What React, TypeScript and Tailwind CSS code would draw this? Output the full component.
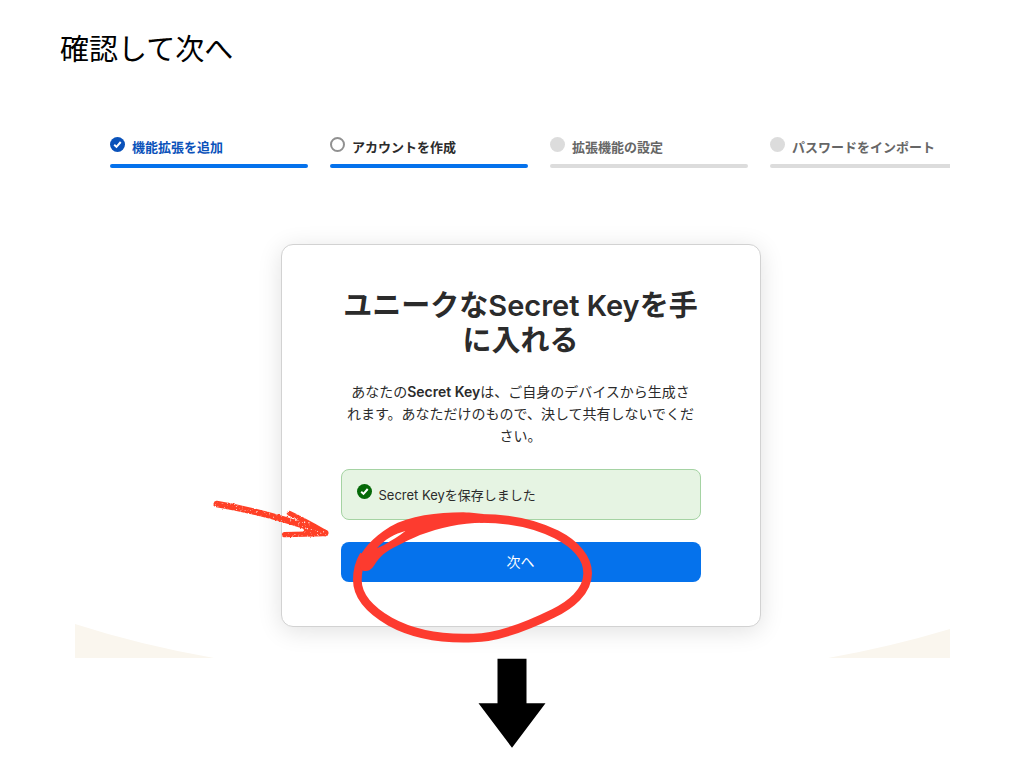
const steps = [
  { label: '機能拡張を追加', state: 'done' },
  { label: 'アカウントを作成', state: 'current' },
  { label: '拡張機能の設定', state: 'todo' },
  { label: 'パスワードをインポート', state: 'todo' },
];

const textColors: Record<string, string> = {
  done: 'text-[#0a52ba]',
  current: 'text-[#2b2b2b]',
  todo: 'text-[#666666]',
};

function CheckCircle({ className }: { className: string }) {
  return (
    <svg viewBox="0 0 15 15" className={`size-[15px] shrink-0 ${className}`} aria-hidden="true">
      <circle cx="7.5" cy="7.5" r="7.5" fill="currentColor" />
      <path d="M4.2 7.7l2.300 2.200 4.200-4.900" fill="none" stroke="#fff" strokeWidth="2" />
    </svg>
  );
}

function StepMarker({ state }: { state: string }) {
  if (state === 'done') return <CheckCircle className="text-[#0a52ba]" />;
  if (state === 'current') return <div className="size-[15px] shrink-0 rounded-full border-2 border-[#919191]" />;
  return <div className="size-[15px] shrink-0 rounded-full bg-[#dcdcdc]" />;
}

function HandDrawnCircle() {
  return (
    <svg viewBox="30 159 741 411" className="pointer-events-none absolute -top-[34px] left-[9px] h-[137px] w-[247px]" aria-hidden="true">
      <path
        d="M420 190C600 190 743 264 743 355C743 410 690 452 640 475C585 502 480 548 400 549C325 552 235 547 150 500C95 468 52 425 52 375C52 345 60 320 72 300"
        fill="none"
        stroke="#fd3b2f"
        strokeWidth="26"
      />
      {/* overlapping start and end of the stroke, with the thin opening between them */}
      <path
        d="M48 325C70 280 95 250 150 215C210 182 290 172 370 172C395 173 410 176 430 177V203C360 204 300 218 240 240C190 262 150 282 130 298C105 320 103 338 88 346C75 352 62 346 60 335ZM111 280L132 270C155 256 177 244 196 228C165 236 134 253 111 280Z"
        fill="#fd3b2f"
        fillRule="evenodd"
      />
    </svg>
  );
}

function CrayonArrow() {
  return (
    <svg viewBox="36 132 354 117" className="pointer-events-none absolute -top-[43px] -left-[129px] h-[39px] w-[118px]" aria-hidden="true">
      <filter id="crayon" x="-5%" y="-10%" width="110%" height="120%">
        <feTurbulence type="fractalNoise" baseFrequency="0.16" numOctaves="2" seed="4" result="noise" />
        <feDisplacementMap in="SourceGraphic" in2="noise" scale="7" xChannelSelector="R" yChannelSelector="G" result="rough" />
        <feColorMatrix in="noise" type="matrix" values="0 0 0 0 0  0 0 0 0 0  0 0 0 0 0  0 0 0 -4 3.500" result="grain" />
        <feComposite in="rough" in2="grain" operator="in" />
      </filter>
      <g fill="none" stroke="#ff4128" strokeLinecap="round" filter="url(#crayon)">
        <path d="M50 147C130 160 240 186 376 234" strokeWidth="19" />
        <path d="M268 175C300 190 330 206 376 232" strokeWidth="15" />
        <path d="M254 239L376 236" strokeWidth="16" />
        <path d="M315 216L374 234L320 234Z" strokeWidth="12" fill="#ff4128" />
      </g>
    </svg>
  );
}

export default function App() {
  return (
    <main className="flex min-h-screen flex-col bg-white font-['Inter','Noto_Sans_CJK_JP',sans-serif] text-[#2b2b2b]">
      <h1 className="px-[60px] pt-[30px] text-[29px] leading-10 text-black">確認して次へ</h1>

      <section className="relative mr-[74px] ml-[75px] mt-[66px] overflow-hidden pb-[31px]">
        <svg viewBox="0 0 139 34" className="absolute bottom-0 left-0 h-[34px] w-[139px]" aria-hidden="true">
          <path d="M0 0Q65 21 139 34H0Z" fill="#faf6ee" />
        </svg>
        <svg viewBox="0 0 122 29" className="absolute right-0 bottom-0 h-[29px] w-[122px]" aria-hidden="true">
          <path d="M122 0Q62 18 0 29H122Z" fill="#faf6ee" />
        </svg>

        <ol className="flex gap-[22px] pl-[35px]">
          {steps.map((step) => (
            <li key={step.label} className="w-[198px] shrink-0">
              <div className={`flex gap-[7px] pt-px text-[13px] leading-5 font-bold ${textColors[step.state]}`}>
                <StepMarker state={step.state} />
                <span>{step.label}</span>
              </div>
              <div className={`mt-[7px] h-1 rounded-full ${step.state === 'todo' ? 'bg-[#dcdcdc]' : 'bg-[#0572ec]'}`} />
            </li>
          ))}
        </ol>

        <div className="flex justify-center pt-[76px] pl-4">
          <div className="w-[480px] rounded-xl border border-[#d2d2d2] bg-white px-[59px] pt-[43px] pb-11 shadow-[0_4px_24px_rgba(0,0,0,0.12)]">
            <h2 className="text-center text-[29px] leading-[35px] font-semibold">ユニークなSecret Keyを手に入れる</h2>
            <p className="mt-[23px] px-1 text-center text-sm leading-[22px]">
              あなたの<strong className="font-semibold">Secret Key</strong>は、ご自身のデバイスから生成されます。あなただけのもので、決して共有しないでください。
            </p>
            <div role="status" className="mt-[22px] flex gap-[7px] rounded-lg border border-[#a5d3a3] bg-[#e6f4e3] px-[15px] pt-[14px] pb-[13px] text-[13px] leading-[22px]">
              <CheckCircle className="text-[#056908]" />
              <span>Secret Keyを保存しました</span>
            </div>
            <div className="relative mt-[22px]">
              <button type="button" className="block h-10 w-full rounded-lg bg-[#0572ec] pb-px text-sm text-white">次へ</button>
              <HandDrawnCircle />
              <CrayonArrow />
            </div>
          </div>
        </div>
      </section>

      <svg viewBox="0 0 68 90" className="mx-auto h-[90px] w-[68px]" aria-hidden="true">
        <path d="M19.500.7H48.500V45.300H67.500L34 89.700L.5 45.300H19.500Z" fill="#000" />
      </svg>
    </main>
  );
}
